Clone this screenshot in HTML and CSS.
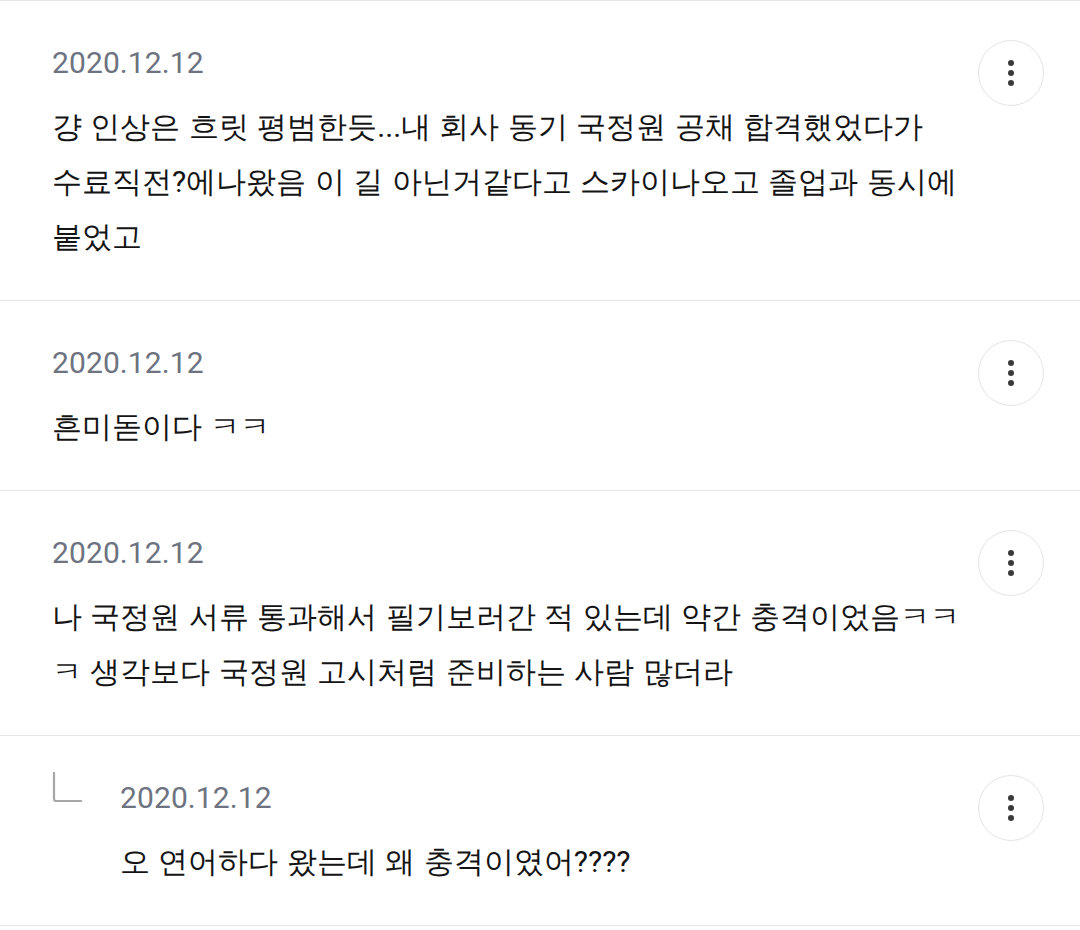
FILE: index.html
```html
<!DOCTYPE html>
<html lang="ko">
<head>
<meta charset="utf-8">
<link rel="stylesheet" href="styles.css">
</head>
<body>
<ul class="comments">
  <li class="comment">
    <div class="body">
      <div class="date">2020.12.12</div>
      <p class="text text-keep">걍 인상은 흐릿 평범한듯...내 회사 동기 국정원 공채 합격했었다가 수료직전?에나왔음 이 길 아닌거같다고 스카이나오고 졸업과 동시에 붙었고</p>
    </div>
    <button class="more" aria-label="더보기"><span class="dots"><i></i><i></i><i></i></span></button>
  </li>
  <li class="comment">
    <div class="body">
      <div class="date">2020.12.12</div>
      <p class="text">흔미돋이다 ㅋㅋ</p>
    </div>
    <button class="more" aria-label="더보기"><span class="dots"><i></i><i></i><i></i></span></button>
  </li>
  <li class="comment">
    <div class="body">
      <div class="date">2020.12.12</div>
      <p class="text">나 국정원 서류 통과해서 필기보러간 적 있는데 약간 충격이었음ㅋㅋㅋ 생각보다 국정원 고시처럼 준비하는 사람 많더라</p>
    </div>
    <button class="more" aria-label="더보기"><span class="dots"><i></i><i></i><i></i></span></button>
  </li>
  <li class="comment reply">
    <svg class="reply-icon" width="30" height="30" viewBox="0 0 30 30"><path d="M2 1 V27 Q2 29 4 29 H29" fill="none" stroke="#a6a6a6" stroke-width="2.2" stroke-linecap="round"/></svg>
    <div class="body">
      <div class="date">2020.12.12</div>
      <p class="text">오 연어하다 왔는데 왜 충격이였어????</p>
    </div>
    <button class="more" aria-label="더보기"><span class="dots"><i></i><i></i><i></i></span></button>
  </li>
</ul>
</body>
</html>
```
FILE: styles.css
```css
html, body {
  margin: 0;
  padding: 0;
  background: #ffffff;
}
body {
  font-family: Roboto, sans-serif;
  color: #141414;
}
.comments {
  list-style: none;
  margin: 0;
  padding: 0;
  border-top: 1px solid #e6e6e6;
}
.comment {
  display: flex;
  align-items: flex-start;
  gap: 13px;
  padding: 42px 36px 36px 52px;
  border-bottom: 1px solid #e6e6e6;
}
.body {
  flex: 1;
  min-width: 0;
}
.date {
  font-family: Roboto, sans-serif;
  font-size: 30px;
  line-height: 40px;
  color: #6d7380;
  letter-spacing: 0.1px;
}
.text {
  margin: 16px 0 0;
  font-family: Roboto, sans-serif;
  font-size: 30px;
  line-height: 55px;
  word-spacing: 1px;
  color: #141414;
}
.text-keep {
  word-break: keep-all;
}
.more {
  flex: none;
  width: 66px;
  height: 66px;
  margin-top: -3px;
  border-radius: 50%;
  border: 1.5px solid #e4e4e4;
  background: #fff;
  padding: 0;
  display: flex;
  align-items: center;
  justify-content: center;
}
.dots {
  display: flex;
  flex-direction: column;
  gap: 4px;
}
.dots i {
  display: block;
  width: 6px;
  height: 6px;
  border-radius: 50%;
  background: #3a3a3a;
}
.reply {
  gap: 0;
}
.reply .reply-icon {
  flex: none;
  margin: -6px 38px 0 0;
}
.reply .more {
  margin-left: 13px;
}
```
